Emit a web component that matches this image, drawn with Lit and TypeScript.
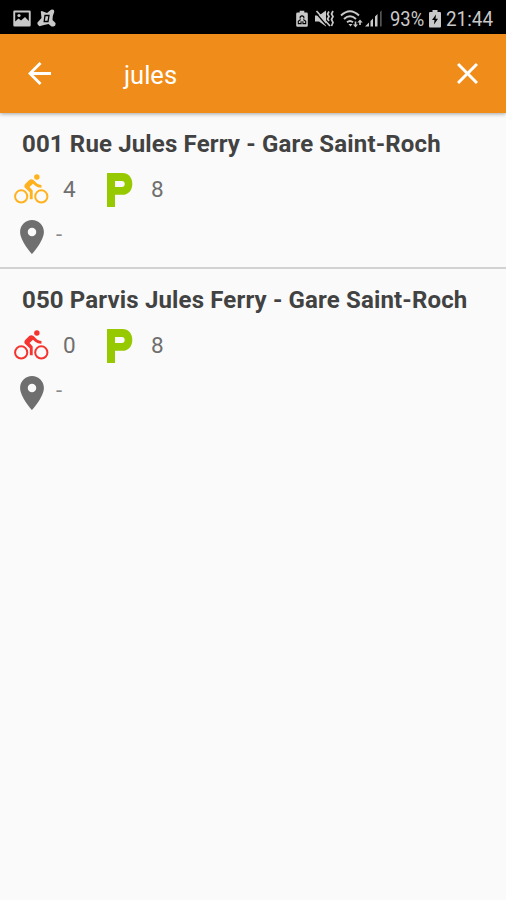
import { LitElement, html, svg, css } from "lit";
import { customElement, property } from "lit/decorators.js";

interface Station {
  name: string;
  bikes: number;
  places: number;
  address: string;
}

const STATIONS: Station[] = [
  { name: "001 Rue Jules Ferry - Gare Saint-Roch", bikes: 4, places: 8, address: "-" },
  { name: "050 Parvis Jules Ferry - Gare Saint-Roch", bikes: 0, places: 8, address: "-" },
];

@customElement("status-bar")
class StatusBar extends LitElement {
  static styles = css`
    :host {
      display: flex;
      align-items: center;
      height: 34px;
      box-sizing: border-box;
      background: #000;
      color: #c9c9c9;
      padding: 3px 13px 0 13px;
      font: 20px/30px Roboto, sans-serif;
    }
    svg { display: block; fill: currentColor; flex: none; }
    .star { margin-left: 6px; }
    .spacer { flex: 1; }
    .saver { margin-right: 1px; }
    .mute { margin-left: 6px; }
    .wifi { margin-left: 6px; }
    .signal { margin-left: 1px; }
    .percent { margin-left: 7px; width: 35px; white-space: nowrap; }
    .percent span, .time span { display: inline-block; transform-origin: 0 50%; }
    .percent span { transform: scaleX(0.92); }
    .battery { margin-left: 4px; }
    .time { margin-left: 5px; width: 47px; white-space: nowrap; }
    .time span { transform: scaleX(0.945); }
  `;
  render() {
    return html`
      <svg width="18" height="17" viewBox="0 0 18 17">
        <path fill-rule="evenodd" d="M1.500 .5h15a1.200 1.200 0 0 1 1.200 1.200v13.600a1.200 1.200 0 0 1-1.200 1.200h-15A1.200 1.200 0 0 1 .3 15.300V1.700A1.200 1.200 0 0 1 1.500 .5zM2.200 2.500v9l3.300-3 2.500 2 4-3.500 3.800 4v-8.500z" />
        <circle cx="6" cy="5.500" r="1.600" />
      </svg>
      <svg class="star" width="19" height="19" viewBox="0 0 19 19">
        <path d="M3.800 2.500q1-.8 2.200 0l4 1.500L14 .8q3.300-1 3.300 2L15.800 7l-.3 4 3 3q.5 3-2 3.500h-2l-3-2.500-4.500 1-4.500 1.200Q-.300 15.500.500 13.500l4-4.500z" />
        <path fill="none" stroke="#000" stroke-width="1.300" d="M8 6.500h4l-1 6H7.200z" />
      </svg>
      <div class="spacer"></div>
      <svg class="saver" width="12" height="18" viewBox="0 0 13 18">
        <path d="M4 0h5v2h2.500q1.300 0 1.300 1.500v12.500q0 1.500-1.300 1.500h-10Q.200 17.500.200 16V3.500Q.200 2 1.500 2H4z" />
        <g fill="none" stroke="#000" stroke-width="1.200">
          <path d="M4.500 8.500V6.800q2-2.300 4 0v1.700M5 9.500l-2.500 2v2.500h3v-2.500M8 9.500l2.500 2v2.500h-3v-2.500" />
        </g>
      </svg>
      <svg class="mute" width="19" height="18" viewBox="0 0 19 18">
        <path d="M0 5.500h4l7-5v16l-7-5H0z" />
        <path fill="none" stroke="#000" stroke-width="1.200" d="M.500 2.500 13 17" />
        <path fill="none" stroke="currentColor" stroke-width="1.700" d="M1.500 1 15 16M14 1.500l-1.500 2.500 1.500 2.500-1.500 2.500 1.500 2M18 1 16.500 4l1.500 2.500L16.500 9.500l1.500 3L16.500 16" />
      </svg>
      <svg class="wifi" width="24" height="18" viewBox="0 0 24 18">
        <g fill="none" stroke="currentColor" stroke-width="1.900">
          <path d="M1 5.500q9-8.500 18 0M4 9q6-5.500 12 0M7 12.300q3-2.500 6 0" />
        </g>
        <path d="M10.500 16.500 8.500 14h4zM15.500 17.500l-2.500-3h1.700v-3h1.600v3H18zM20 9.500l2.700 3H20.800V15h-1.600v-2.500h-1.900z" />
      </svg>
      <svg class="signal" width="18" height="17" viewBox="0 0 18 17">
        <path d="M0 16.500 4 12.500v4zM5.500 11 8 8.500v8H5.500zM10 6.500 12.500 4v12.500H10z" />
        <path fill="#555" d="M15 2l1.700-1.700v16.200H15z" />
      </svg>
      <div class="percent"><span>93%</span></div>
      <svg class="battery" width="12" height="18" viewBox="0 0 12 18">
        <path d="M3.500 0h5v2H11q1 0 1 1.200v13.100q0 1.200-1 1.200H1q-1 0-1-1.200V3.200Q0 2 1 2h2.500z" />
        <path fill="#000" d="M7 4.500 3 10h2.500L5 14.500 9 8.800H6.500z" />
      </svg>
      <div class="time"><span>21:44</span></div>
    `;
  }
}

@customElement("search-bar")
class SearchBar extends LitElement {
  @property() query = "";
  static styles = css`
    :host {
      display: flex;
      align-items: center;
      height: 79px;
      box-sizing: border-box;
      background: #f08d1a;
      color: #fff;
      padding: 0 28px;
      position: relative;
      box-shadow: 0 1px 4px rgba(0, 0, 0, 0.35);
      font: 25.500px/36px Roboto, sans-serif;
    }
    svg { display: block; fill: #fff; }
    .query { flex: 1; margin: 2px 0 0 73px; }
  `;
  render() {
    return html`
      <svg width="23" height="23" viewBox="4 4 16 16">
        <path d="M20 11H7.830l5.590-5.590L12 4l-8 8 8 8 1.410-1.410L7.830 13H20v-2z" />
      </svg>
      <div class="query">${this.query}</div>
      <svg width="21" height="21" viewBox="5 5 14 14">
        <path d="M19 6.410 17.590 5 12 10.590 6.410 5 5 6.410 10.590 12 5 17.590 6.410 19 12 13.410 17.590 19 19 17.590 13.410 12z" />
      </svg>
    `;
  }
}

const wheel = (cx: number) => svg`<circle cx=${cx} cy="17" r="4.250" fill="none" stroke="currentColor" stroke-width="1.400" />`;

@customElement("station-row")
class StationRow extends LitElement {
  @property({ attribute: false }) station!: Station;
  static styles = css`
    :host {
      display: block;
      height: 156px;
      box-sizing: border-box;
      padding: 15px 14px 0;
      font-family: Roboto, sans-serif;
      color: #6f6f6f;
    }
    .name {
      margin: 0 0 0 8px;
      font-size: 24px;
      line-height: 32px;
      font-weight: 700;
      letter-spacing: 0.150px;
      color: #424242;
      white-space: nowrap;
    }
    .counts { display: flex; align-items: center; height: 34px; margin-top: 12.600px; }
    .bike { color: #ffb21e; }
    .bike.empty { color: #f5332f; }
    svg { display: block; fill: currentColor; flex: none; }
    .value { font-size: 22.500px; line-height: 32px; width: 44px; margin: -2px 0 0 14.500px; }
    .parking { color: #97c900; }
    .parking + .value { margin-left: 18.500px; }
    .place { display: flex; align-items: center; margin: 13.400px 0 0 5.500px; }
    .address { margin: -4px 0 0 12.500px; font-size: 22px; line-height: 30px; color: #8a8a8a; }
  `;
  render() {
    const s = this.station;
    return html`
      <h2 class="name">${s.name}</h2>
      <div class="counts">
        <svg class="bike ${s.bikes === 0 ? "empty" : ""}" width="34.500" height="34.500" viewBox="0 0 24 24">
          <circle cx="15.900" cy="3.500" r="1.900" />
          ${wheel(5)}${wheel(19)}
          <path d="M10.800 10.500l2.400-2.400.8.800c1.300 1.300 3 2.100 5.100 2.100V9c-1.500 0-2.700-.6-3.600-1.500l-1.900-1.900c-.5-.4-1-.6-1.600-.6s-1.100.2-1.400.6L7.800 8.400c-.4.4-.6.9-.6 1.400 0 .6.2 1.100.6 1.400L11 14v5h2v-6.200l-2.200-2.300z" />
        </svg>
        <div class="value">${s.bikes}</div>
        <svg class="parking" width="25.500" height="34" viewBox="0 0 25.500 34">
          <path fill-rule="evenodd" d="M0 0h15.500C21.500 0 25.300 4.600 25.300 10.900s-3.800 10.900-9.800 10.900H8V34H0zM8 8v6h6.800c1.900 0 2.900-1.300 2.900-3s-1-3-2.900-3z" />
        </svg>
        <div class="value">${s.places}</div>
      </div>
      <div class="place">
        <svg width="24" height="34" viewBox="5 2 14 20">
          <path d="M12 2C8.130 2 5 5.130 5 9c0 5.250 7 13 7 13s7-7.750 7-13c0-3.870-3.130-7-7-7zm0 9.500c-1.380 0-2.500-1.120-2.500-2.500s1.120-2.500 2.500-2.500 2.500 1.120 2.500 2.500-1.120 2.500-2.500 2.500z" />
        </svg>
        <div class="address">${s.address}</div>
      </div>
    `;
  }
}

@customElement("app-root")
class AppRoot extends LitElement {
  static styles = css`
    :host {
      display: flex;
      flex-direction: column;
      height: 900px;
      background: #fafafa;
      overflow: hidden;
    }
    .row { height: 154px; }
    .row + .row { height: 156px; border-top: 2px solid #d2d2d2; }
  `;
  render() {
    return html`
      <status-bar></status-bar>
      <search-bar query="jules"></search-bar>
      <main>
        ${STATIONS.map((s) => html`<station-row class="row" .station=${s}></station-row>`)}
      </main>
    `;
  }
}
